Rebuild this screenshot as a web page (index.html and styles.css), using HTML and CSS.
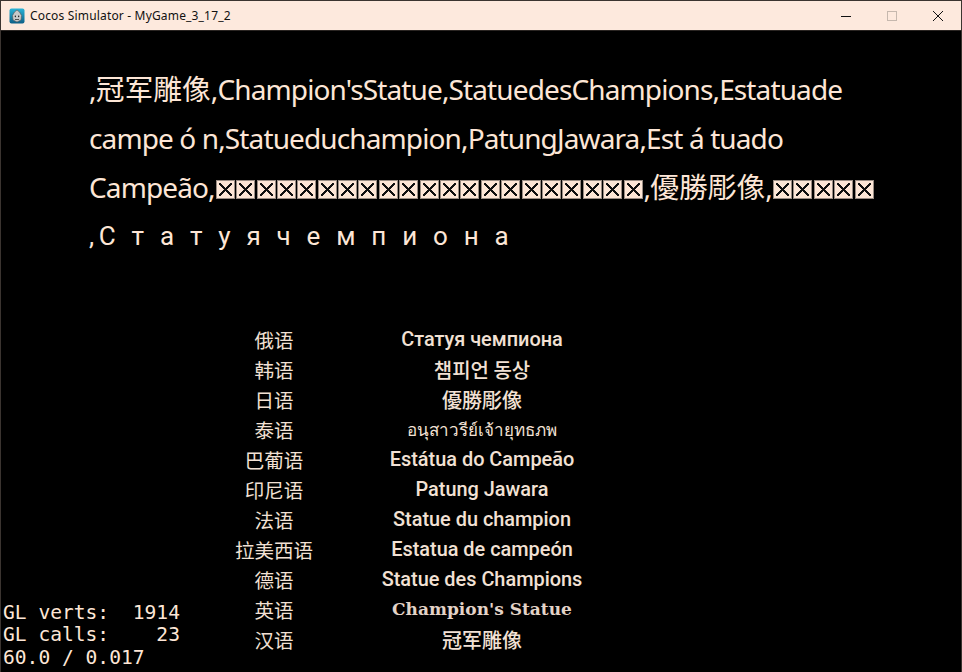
FILE: index.html
```html
<!DOCTYPE html>
<html>
<head>
<meta charset="utf-8">
<link rel="stylesheet" href="styles.css">
</head>
<body>
<div class="window">
  <div class="titlebar">
    <svg class="appicon" width="16" height="16" viewBox="0 0 16 16">
      <defs>
        <linearGradient id="ig" x1="0" y1="0" x2="0" y2="1">
          <stop offset="0" stop-color="#2bb3d6"/>
          <stop offset="1" stop-color="#0d5f86"/>
        </linearGradient>
      </defs>
      <rect x="0.5" y="0.5" width="15" height="15" rx="2" fill="url(#ig)"/>
      <path d="M8 2 L10.5 4 L12.5 7.5 L12 12 L8 14 L4 12 L3.5 7.5 L5.5 4 Z" fill="#c9c9c9" stroke="#555" stroke-width="0.6"/>
      <path d="M5.2 8 L7 7.6 L7 9.4 Z M10.8 8 L9 7.6 L9 9.4 Z" fill="#222"/>
      <path d="M6 11.5 L10 11.5" stroke="#333" stroke-width="0.8"/>
    </svg>
    <span class="title">Cocos Simulator - MyGame_3_17_2</span>
    <div class="controls">
      <span class="ctl"><svg width="12" height="12" viewBox="0 0 12 12"><path d="M1 6.5 H11" stroke="#111" stroke-width="1"/></svg></span>
      <span class="ctl"><svg width="12" height="12" viewBox="0 0 12 12"><rect x="1.5" y="1.5" width="9" height="9" fill="none" stroke="#c6b8ae" stroke-width="1"/></svg></span>
      <span class="ctl"><svg width="12" height="12" viewBox="0 0 12 12"><path d="M1 1 L11 11 M11 1 L1 11" stroke="#111" stroke-width="1"/></svg></span>
    </div>
  </div>
  <div class="content">
    <div class="bigtext">
      <div class="line">,<span class="cjk">冠军雕像</span>,Champion'sStatue,StatuedesChampions,Estatuade</div>
      <div class="line">campe ó n,Statueduchampion,PatungJawara,Est á tuado</div>
      <div class="line">Campeão,<span class="boxes"><i></i><i></i><i></i><i></i><i></i><i></i><i></i><i></i><i></i><i></i><i></i><i></i><i></i><i></i><i></i><i></i><i></i><i></i><i></i><i></i><i></i></span>,<span class="cjk">優勝彫像</span>,<span class="boxes"><i></i><i></i><i></i><i></i><i></i></span></div>
      <div class="line ru">,С т а т у я ч е м п и о н а</div>
    </div>
    <div class="table">
      <div class="lang">俄语</div><div class="val">Статуя чемпиона</div>
      <div class="lang">韩语</div><div class="val ko">챔피언 동상</div>
      <div class="lang">日语</div><div class="val jp">優勝彫像</div>
      <div class="lang">泰语</div><div class="val th">อนุสาวรีย์เจ้ายุทธภพ</div>
      <div class="lang">巴葡语</div><div class="val">Estátua do Campeão</div>
      <div class="lang">印尼语</div><div class="val">Patung Jawara</div>
      <div class="lang">法语</div><div class="val">Statue du champion</div>
      <div class="lang">拉美西语</div><div class="val">Estatua de campeón</div>
      <div class="lang">德语</div><div class="val">Statue des Champions</div>
      <div class="lang">英语</div><div class="val serif">Champion's Statue</div>
      <div class="lang">汉语</div><div class="val zh">冠军雕像</div>
    </div>
    <div class="stats"><div class="sl">GL verts:  1914</div><div class="sl">GL calls:    23</div><div class="sl">60.0 / 0.017</div></div>
  </div>
</div>
</body>
</html>
```

FILE: styles.css
```css
html, body {
  margin: 0;
  padding: 0;
  background: #000;
}
.window {
  width: 962px;
  height: 672px;
  box-sizing: border-box;
  border: 1px solid #3b3430;
  border-bottom: none;
  display: flex;
  flex-direction: column;
  overflow: hidden;
}
.titlebar {
  height: 29px;
  flex: none;
  background: #fde9dd;
  border-bottom: 1px solid #2a2522;
  display: flex;
  align-items: center;
  font-family: "Noto Sans", "Open Sans", sans-serif;
  font-size: 12px;
  color: #111;
}
.appicon {
  margin-left: 8px;
  margin-right: 5px;
  flex: none;
}
.title {
  letter-spacing: 0.17px;
}
.controls {
  margin-left: auto;
  display: flex;
}
.ctl {
  width: 46px;
  height: 29px;
  display: flex;
  align-items: center;
  justify-content: center;
}
.content {
  flex: 1;
  background: #000;
  position: relative;
  color: #fde6d6;
}
.bigtext {
  padding: 33px 0 0 88px;
  font-family: "Noto Sans", "Noto Sans CJK SC", sans-serif;
  font-size: 28px;
  line-height: 48.5px;
  letter-spacing: -0.88px;
}
.line {
  white-space: nowrap;
}
.cjk {
  font-family: "Noto Sans CJK SC", sans-serif;
  font-size: 28.8px;
  letter-spacing: 0;
}
.line.ru {
  font-family: Roboto, "Noto Sans", sans-serif;
  letter-spacing: 4.7px;
  font-size: 26px;
}
.boxes {
  display: inline-flex;
  gap: 1.4px;
  vertical-align: -1px;
  margin-left: 1px;
  margin-right: 1px;
}
.boxes i {
  display: block;
  width: 19px;
  height: 19px;
  box-sizing: border-box;
  background:
    linear-gradient(to top right, transparent calc(50% - 0.9px), #111 calc(50% - 0.9px), #111 calc(50% + 0.9px), transparent calc(50% + 0.9px)) 2px 2px / 13px 13px no-repeat,
    linear-gradient(to bottom right, transparent calc(50% - 0.9px), #111 calc(50% - 0.9px), #111 calc(50% + 0.9px), transparent calc(50% + 0.9px)) 2px 2px / 13px 13px no-repeat,
    #fde6d6;
  border: 1px solid #9a8d84;
}
.table {
  margin-top: 64px;
  margin-left: 213px;
  display: grid;
  grid-template-columns: 120px 296px;
  grid-auto-rows: 30px;
  align-items: center;
}
.lang {
  text-align: center;
  font-family: "Noto Sans CJK SC", sans-serif;
  font-size: 19.5px;
  color: #f2e1d4;
}
.val {
  text-align: center;
  font-family: Roboto, "Noto Sans", sans-serif;
  font-weight: 500;
  font-size: 19.9px;
  color: #f2e1d4;
  white-space: nowrap;
}
.val.ko { font-family: "Noto Sans CJK KR", sans-serif; font-weight: 500; font-size: 20px; }
.val.jp { font-family: "Noto Sans CJK JP", sans-serif; font-weight: 500; font-size: 20px; }
.val.zh { font-family: "Noto Sans CJK SC", sans-serif; font-weight: 500; font-size: 20px; }
.val.th { font-family: "Noto Sans", "DejaVu Sans", sans-serif; font-weight: 400; font-size: 17px; }
.val.serif {
  font-family: "DejaVu Serif", serif;
  font-weight: bold;
  font-size: 17px;
  color: #e3d3c7;
}
.stats {
  position: absolute;
  left: 2px;
  bottom: 3px;
  font-family: "DejaVu Sans Mono", monospace;
  font-size: 19.6px;
  line-height: 22.5px;
  color: #fde6d6;
}
.sl {
  white-space: pre;
}
```
